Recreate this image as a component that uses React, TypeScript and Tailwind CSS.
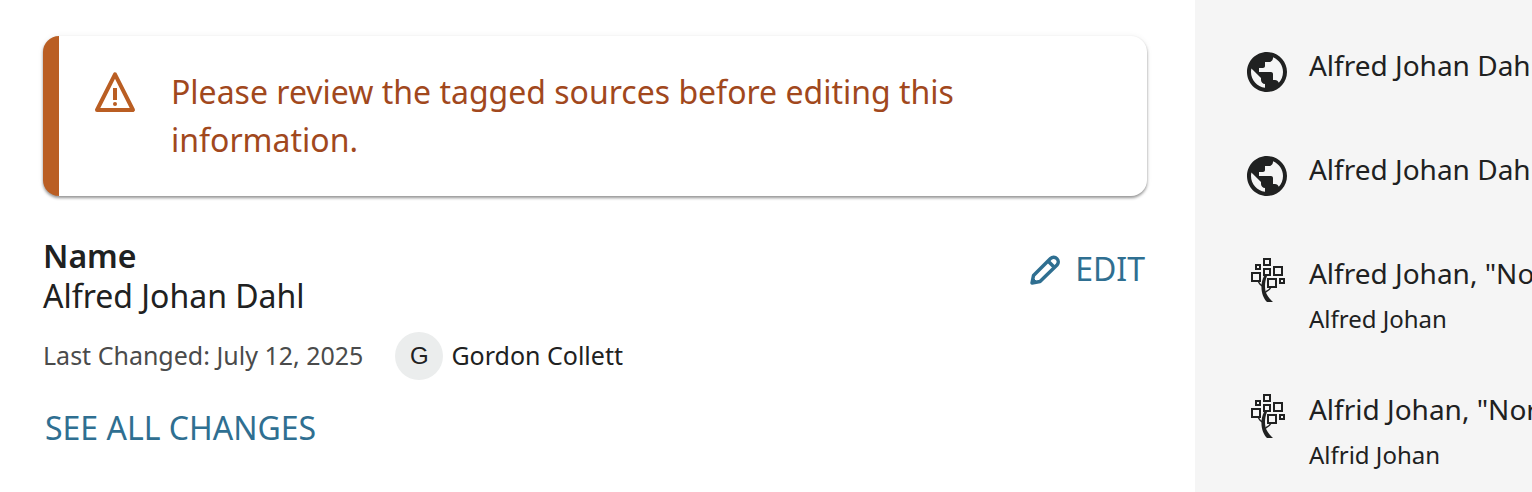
import type { ReactNode } from 'react';

interface SourceItem {
    title: string;
    subtitle?: string;
    kind: 'web' | 'tree';
}

const sources: SourceItem[] = [
    { title: 'Alfred Johan Dahl', kind: 'web' },
    { title: 'Alfred Johan Dahl', kind: 'web' },
    { title: 'Alfred Johan, "Norway Baptisms"', subtitle: 'Alfred Johan', kind: 'tree' },
    { title: 'Alfrid Johan, "Norway Census"', subtitle: 'Alfrid Johan', kind: 'tree' },
];

function Icon({ className, children }: { className: string; children: ReactNode }) {
    return (
        <svg viewBox="0 0 24 24" fill="currentColor" aria-hidden="true" className={className}>
            {children}
        </svg>
    );
}

function WarningIcon() {
    return (
        <Icon className="size-12 shrink-0 text-[#ba5e23]">
            <path d="M12 3.2 21 21H3Z" fill="none" stroke="currentColor" strokeWidth="2" strokeLinejoin="round" />
            <path d="M11 10h2v6h-2z" />
            <circle cx="12" cy="18" r="1" />
        </Icon>
    );
}

function PencilIcon() {
    return (
        <svg viewBox="0 0 32 32" fill="none" stroke="currentColor" strokeWidth="3.5" strokeLinejoin="round" aria-hidden="true" className="size-8">
            <path d="M3 30 4.500 22.500 21.500 5.500a4.600 4.600 0 0 1 6.500 6.500L11 28.500Z" />
            <path d="m19 8 6.500 6.500" />
            <path d="m3 30 1-5 4 4Z" fill="currentColor" strokeWidth="1" />
        </svg>
    );
}

function GlobeIcon() {
    return (
        <Icon className="size-12 shrink-0">
            <path d="M12 2C6.48 2 2 6.48 2 12s4.48 10 10 10 10-4.48 10-10S17.52 2 12 2zm-1 17.93c-3.95-.49-7-3.85-7-7.93 0-.62.08-1.21.21-1.79L9 15v1c0 1.1.9 2 2 2v1.93zm6.9-2.54c-.26-.81-1-1.39-1.9-1.39h-1v-3c0-.55-.45-1-1-1H8v-2h2c.55 0 1-.45 1-1V7h2c1.1 0 2-.9 2-2v-.41c2.93 1.19 5 4.06 5 7.41 0 2.08-.8 3.97-2.1 5.39z" />
        </Icon>
    );
}

function TreeIcon() {
    return (
        <svg viewBox="0 0 48 48" fill="none" stroke="currentColor" strokeWidth="2" aria-hidden="true" className="size-12 shrink-0">
            <rect x="21" y="3" width="6" height="6" />
            <rect x="13" y="9" width="4" height="4" />
            <rect x="21" y="13" width="6" height="6" />
            <rect x="31" y="11" width="8" height="8" />
            <rect x="9" y="17" width="8" height="8" />
            <rect x="25" y="23" width="8" height="8" />
            <rect x="37" y="23" width="4" height="4" />
            <path d="M15.5 26c1 2 2 3 4 4M27.5 32c-1 2-3 3-5 4" strokeWidth="1.5" />
            <path d="M21 20h3c-2 5-2.500 10-1.500 15 1 4 4 8 7.500 11h-6c-5-5-8-16-3-26Z" fill="currentColor" stroke="none" />
        </svg>
    );
}

export default function App() {
    return (
        <div className="flex h-screen overflow-hidden bg-white font-['Noto_Sans',sans-serif] text-[#202121]">
            <main className="min-w-0 flex-1 px-12 pt-9 pl-[43px]">
                <div role="alert" className="flex gap-8 rounded-2xl border-l-16 border-[#ba5e23] bg-white p-8 shadow-[0_2px_3px_rgba(0,0,0,0.4),0_0_6px_rgba(0,0,0,0.06)]">
                    <WarningIcon />
                    <p className="text-[32px] leading-12 text-[#a1481d]">
                        Please review the tagged sources before editing this information.
                    </p>
                </div>

                <section className="mt-10">
                    <div className="flex items-start justify-between">
                        <div className="text-[32px] leading-10">
                            <h2 className="font-semibold">Name</h2>
                            <p>Alfred Johan Dahl</p>
                        </div>
                        <button type="button" className="mt-2 mr-0.5 flex items-center gap-3.5 text-[32px] leading-[50px] text-[#2f6f91]">
                            <PencilIcon />
                            EDIT
                        </button>
                    </div>
                    <div className="mt-4 flex items-center text-[25px]">
                        <p className="text-[#4a4b4b]">Last Changed: July 12, 2025</p>
                        <span className="mr-2 ml-8 flex size-12 items-center justify-center rounded-full bg-[#ebeded] font-['Liberation_Sans',sans-serif] text-2xl">G</span>
                        <span>Gordon Collett</span>
                    </div>
                    <a href="#changes" className="mt-6 ml-0.5 inline-block text-[32px] leading-12 text-[#2f6f91]">SEE ALL CHANGES</a>
                </section>
            </main>

            <aside className="w-[22%] shrink-0 overflow-hidden bg-[#f5f5f5] pt-11 pl-12">
                <ul className="flex flex-col gap-13">
                    {sources.map((source, index) => (
                        <li key={index} className="flex gap-[18px]">
                            <div className="pt-1">
                                {source.kind === 'web' ? <GlobeIcon /> : <TreeIcon />}
                            </div>
                            <div className="whitespace-nowrap">
                                <p className="text-[28px] leading-[42px]">{source.title}</p>
                                {source.subtitle && <p className="mt-2 text-2xl leading-[34px]">{source.subtitle}</p>}
                            </div>
                        </li>
                    ))}
                </ul>
            </aside>
        </div>
    );
}
